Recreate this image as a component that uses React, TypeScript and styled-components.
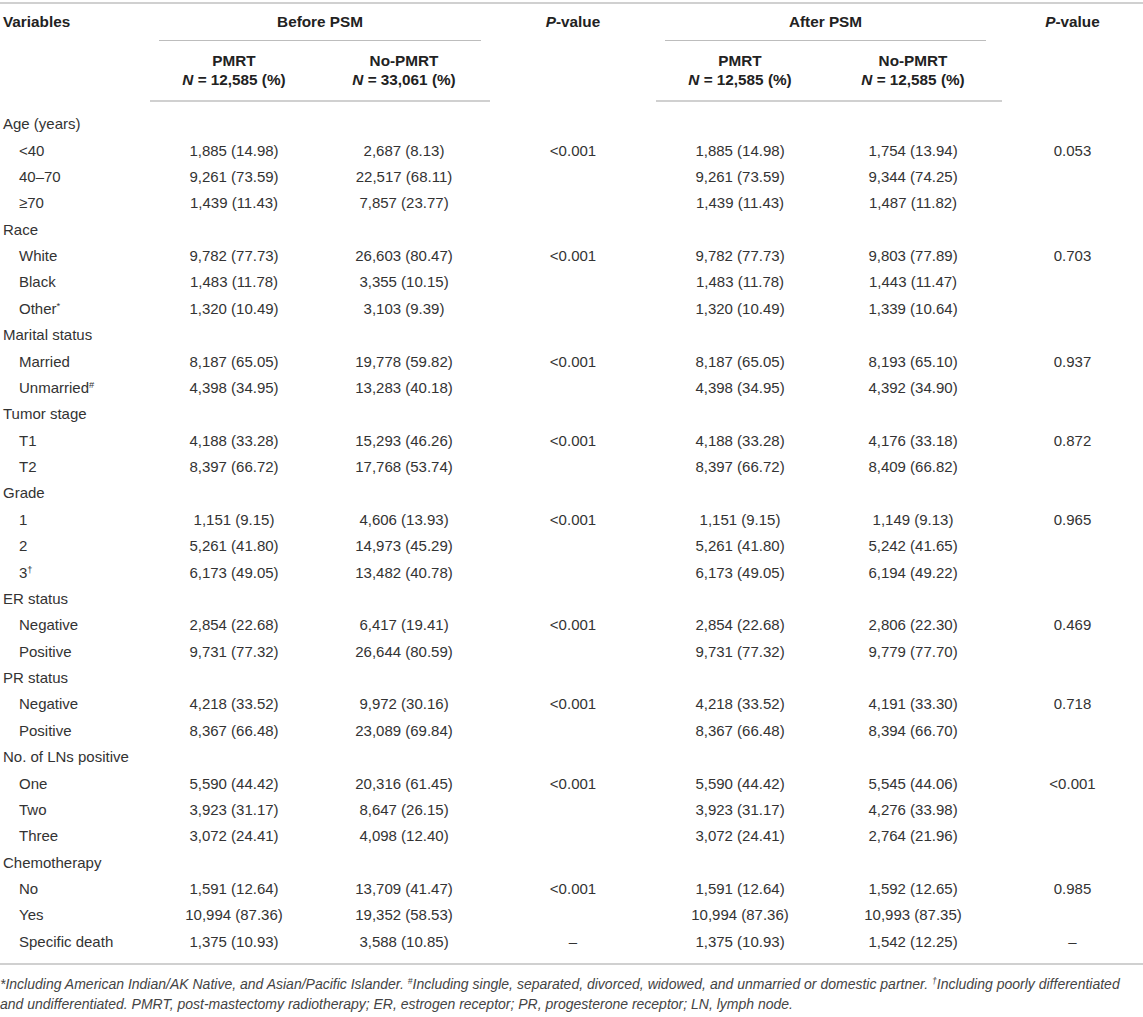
import styled, { createGlobalStyle } from 'styled-components'

const GlobalStyle = createGlobalStyle`
  body {
    margin: 0;
    background: #ffffff;
  }
`

const Page = styled.div`
  width: 1143px;
  padding-top: 2px;
  font-family: 'Liberation Sans', Arial, Helvetica, sans-serif;
  color: #333333;
`

const Table = styled.table`
  width: 100%;
  border-collapse: collapse;
  table-layout: fixed;
  font-size: 15px;
`

const HeadRow = styled.tr<{ top?: boolean }>`
  border-top: ${({ top }) => (top ? '2px solid #d0d0d0' : 'none')};
`

const HeadCell = styled.th<{ align?: 'left' | 'center' }>`
  font-size: 15.3px;
  font-weight: 700;
  color: #222222;
  text-align: ${({ align }) => align || 'center'};
  vertical-align: top;
  line-height: 18px;
  padding: 9px 3px 0;
`

const GroupCell = styled.th`
  font-size: 15.3px;
  font-weight: 700;
  color: #222222;
  text-align: center;
  vertical-align: top;
  line-height: 18px;
  padding: 9px 0 0;
`

const GroupTitle = styled.div<{ endGap?: number }>`
  margin: 0 ${({ endGap }) => endGap ?? 9}px 0 9px;
  padding-bottom: 9px;
  border-bottom: 1px solid #bdbdbd;
`

const SubHeadCell = styled.th`
  font-size: 15.3px;
  font-weight: 700;
  color: #222222;
  text-align: center;
  line-height: 19px;
  padding: 10px 3px 11px;
  border-bottom: 2px solid #d0d0d0;
`

const Row = styled.tr<{ first?: boolean; last?: boolean }>`
  & > td {
    padding-top: ${({ first }) => (first ? '14.2px' : '4.2px')};
    padding-bottom: ${({ last }) => (last ? '12.2px' : '4.2px')};
  }
`

const LabelCell = styled.td<{ indent?: boolean }>`
  line-height: 18px;
  padding-left: ${({ indent }) => (indent ? '19px' : '3px')};
  padding-right: 3px;
  white-space: nowrap;
`

const ValueCell = styled.td`
  line-height: 18px;
  text-align: center;
  padding-left: 3px;
  padding-right: 3px;
  white-space: nowrap;
`

const Foot = styled.tfoot`
  border-top: 2px solid #d0d0d0;
`

const Note = styled.td`
  padding: 9px 0 0;
  font-size: 14px;
  line-height: 20px;
  font-style: italic;
  color: #444444;
`

const Sup = styled.sup`
  font-size: 0.62em;
  line-height: 0;
  vertical-align: 0.55em;
`

type DataRow = {
  label: React.ReactNode
  group?: boolean
  values?: string[]
}

const rows: DataRow[] = [
  { label: 'Age (years)', group: true },
  { label: '<40', values: ['1,885 (14.98)', '2,687 (8.13)', '<0.001', '1,885 (14.98)', '1,754 (13.94)', '0.053'] },
  { label: '40–70', values: ['9,261 (73.59)', '22,517 (68.11)', '', '9,261 (73.59)', '9,344 (74.25)', ''] },
  { label: '≥70', values: ['1,439 (11.43)', '7,857 (23.77)', '', '1,439 (11.43)', '1,487 (11.82)', ''] },
  { label: 'Race', group: true },
  { label: 'White', values: ['9,782 (77.73)', '26,603 (80.47)', '<0.001', '9,782 (77.73)', '9,803 (77.89)', '0.703'] },
  { label: 'Black', values: ['1,483 (11.78)', '3,355 (10.15)', '', '1,483 (11.78)', '1,443 (11.47)', ''] },
  { label: <>Other<Sup>*</Sup></>, values: ['1,320 (10.49)', '3,103 (9.39)', '', '1,320 (10.49)', '1,339 (10.64)', ''] },
  { label: 'Marital status', group: true },
  { label: 'Married', values: ['8,187 (65.05)', '19,778 (59.82)', '<0.001', '8,187 (65.05)', '8,193 (65.10)', '0.937'] },
  { label: <>Unmarried<Sup>#</Sup></>, values: ['4,398 (34.95)', '13,283 (40.18)', '', '4,398 (34.95)', '4,392 (34.90)', ''] },
  { label: 'Tumor stage', group: true },
  { label: 'T1', values: ['4,188 (33.28)', '15,293 (46.26)', '<0.001', '4,188 (33.28)', '4,176 (33.18)', '0.872'] },
  { label: 'T2', values: ['8,397 (66.72)', '17,768 (53.74)', '', '8,397 (66.72)', '8,409 (66.82)', ''] },
  { label: 'Grade', group: true },
  { label: '1', values: ['1,151 (9.15)', '4,606 (13.93)', '<0.001', '1,151 (9.15)', '1,149 (9.13)', '0.965'] },
  { label: '2', values: ['5,261 (41.80)', '14,973 (45.29)', '', '5,261 (41.80)', '5,242 (41.65)', ''] },
  { label: <>3<Sup>†</Sup></>, values: ['6,173 (49.05)', '13,482 (40.78)', '', '6,173 (49.05)', '6,194 (49.22)', ''] },
  { label: 'ER status', group: true },
  { label: 'Negative', values: ['2,854 (22.68)', '6,417 (19.41)', '<0.001', '2,854 (22.68)', '2,806 (22.30)', '0.469'] },
  { label: 'Positive', values: ['9,731 (77.32)', '26,644 (80.59)', '', '9,731 (77.32)', '9,779 (77.70)', ''] },
  { label: 'PR status', group: true },
  { label: 'Negative', values: ['4,218 (33.52)', '9,972 (30.16)', '<0.001', '4,218 (33.52)', '4,191 (33.30)', '0.718'] },
  { label: 'Positive', values: ['8,367 (66.48)', '23,089 (69.84)', '', '8,367 (66.48)', '8,394 (66.70)', ''] },
  { label: 'No. of LNs positive', group: true },
  { label: 'One', values: ['5,590 (44.42)', '20,316 (61.45)', '<0.001', '5,590 (44.42)', '5,545 (44.06)', '<0.001'] },
  { label: 'Two', values: ['3,923 (31.17)', '8,647 (26.15)', '', '3,923 (31.17)', '4,276 (33.98)', ''] },
  { label: 'Three', values: ['3,072 (24.41)', '4,098 (12.40)', '', '3,072 (24.41)', '2,764 (21.96)', ''] },
  { label: 'Chemotherapy', group: true },
  { label: 'No', values: ['1,591 (12.64)', '13,709 (41.47)', '<0.001', '1,591 (12.64)', '1,592 (12.65)', '0.985'] },
  { label: 'Yes', values: ['10,994 (87.36)', '19,352 (58.53)', '', '10,994 (87.36)', '10,993 (87.35)', ''] },
  { label: 'Specific death', values: ['1,375 (10.93)', '3,588 (10.85)', '–', '1,375 (10.93)', '1,542 (12.25)', '–'] },
]

const colWidths = [150, 168, 172, 166, 168, 178, 141]

const App: React.FC = () => {
  return (
    <Page>
      <GlobalStyle />
      <Table>
        <colgroup>
          {colWidths.map((w, i) => (
            <col key={i} style={{ width: w }} />
          ))}
        </colgroup>
        <thead>
          <HeadRow top>
            <HeadCell align="left" rowSpan={2}>Variables</HeadCell>
            <GroupCell colSpan={2}>
              <GroupTitle>Before PSM</GroupTitle>
            </GroupCell>
            <HeadCell rowSpan={2}>
              <i>P</i>-value
            </HeadCell>
            <GroupCell colSpan={2}>
              <GroupTitle endGap={16}>After PSM</GroupTitle>
            </GroupCell>
            <HeadCell rowSpan={2}>
              <i>P</i>-value
            </HeadCell>
          </HeadRow>
          <tr>
            <SubHeadCell>
              PMRT
              <br />
              <i>N</i> = 12,585 (%)
            </SubHeadCell>
            <SubHeadCell>
              No-PMRT
              <br />
              <i>N</i> = 33,061 (%)
            </SubHeadCell>
            <SubHeadCell>
              PMRT
              <br />
              <i>N</i> = 12,585 (%)
            </SubHeadCell>
            <SubHeadCell>
              No-PMRT
              <br />
              <i>N</i> = 12,585 (%)
            </SubHeadCell>
          </tr>
        </thead>
        <tbody>
          {rows.map((r, i) => (
            <Row key={i} first={i === 0} last={i === rows.length - 1}>
              <LabelCell indent={!r.group}>{r.label}</LabelCell>
              {(r.values || ['', '', '', '', '', '']).map((v, j) => (
                <ValueCell key={j}>{v}</ValueCell>
              ))}
            </Row>
          ))}
        </tbody>
        <Foot>
          <tr>
            <Note colSpan={7}>
              *Including American Indian/AK Native, and Asian/Pacific Islander. <Sup>#</Sup>Including single,
              separated, divorced, widowed, and unmarried or domestic partner. <Sup>†</Sup>Including poorly
              differentiated
              <br />
              and undifferentiated. PMRT, post-mastectomy radiotherapy; ER, estrogen receptor; PR, progesterone
              receptor; LN, lymph node.
            </Note>
          </tr>
        </Foot>
      </Table>
    </Page>
  )
}

export default App
